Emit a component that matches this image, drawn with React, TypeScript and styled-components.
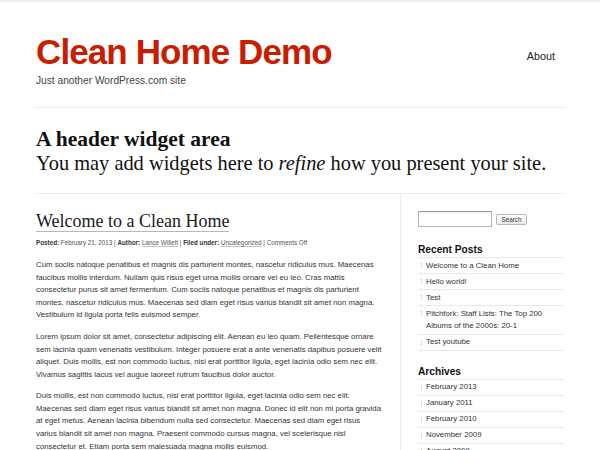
import React from "react";
import styled, { createGlobalStyle } from "styled-components";

const GlobalStyle = createGlobalStyle`
  html, body { margin: 0; padding: 0; background: #fff; }
  body {
    border-top: 2px solid #f0f0f0;
    font-family: "Liberation Sans", Arial, sans-serif;
    color: #333;
  }
  * { box-sizing: border-box; }
`;

const Masthead = styled.header`
  margin: 0 36px;
  padding: 32.4px 0 19px;
  border-bottom: 1px solid #ececec;
  display: flex;
  justify-content: space-between;
  align-items: flex-start;
`;

const Branding = styled.div`
  display: flex;
  flex-direction: column;
`;

const SiteTitle = styled.h1`
  margin: 0;
  font-family: "Liberation Sans", Arial, sans-serif;
  font-weight: bold;
  font-size: 35px;
  line-height: 35px;
  letter-spacing: -0.9px;
  color: #c81d00;
`;

const Tagline = styled.p`
  margin: 4.6px 0 0;
  font-size: 10.2px;
  line-height: 14px;
  color: #444;
`;

const Nav = styled.nav`
  margin-top: 12px;
  padding-right: 9px;
`;

const NavLink = styled.a`
  font-size: 10.8px;
  line-height: 14px;
  color: #222;
  text-decoration: none;
`;

const WidgetArea = styled.section`
  margin: 0 36px;
  padding: 18.7px 0 18.6px;
  font-family: "Liberation Serif", "Times New Roman", serif;
  color: #111;
`;

const WidgetHeading = styled.h2`
  margin: 0;
  font-size: 21.5px;
  line-height: 24px;
  font-weight: bold;
`;

const WidgetText = styled.p`
  margin: 0;
  font-size: 20.4px;
  line-height: 24px;
`;

const Content = styled.div`
  margin: 0 36px;
  border-top: 1px solid #ececec;
  display: flex;
  align-items: stretch;
  min-height: 270px;
`;

const Main = styled.main`
  flex: 0 0 364px;
  padding: 15.3px 18.5px 0 0;
`;

const PostTitle = styled.h2`
  margin: 0;
  font-family: "Liberation Serif", "Times New Roman", serif;
  font-weight: normal;
  font-size: 18px;
  line-height: 22px;
  color: #1a1a1a;
`;

const PostTitleLink = styled.span`
  border-bottom: 1px solid #b8b8b8;
`;

const Meta = styled.div`
  margin-top: 6.6px;
  font-size: 6.3px;
  line-height: 10px;
  color: #555;
`;

const MetaLabel = styled.b`
  color: #333;
`;

const MetaLink = styled.span`
  border-bottom: 1px solid #c4c4c4;
`;

const Body = styled.div`
  margin-top: 10.8px;
`;

const Paragraph = styled.p`
  margin: 0 0 9px;
  font-size: 7.8px;
  line-height: 12.6px;
  color: #333;
`;

const Sidebar = styled.aside`
  flex: 1;
  border-left: 1px solid #ececec;
  padding: 17px 0 0 17px;
`;

const SearchForm = styled.form`
  display: flex;
  align-items: center;
  gap: 4px;
  margin-bottom: 17px;
`;

const SearchInput = styled.input`
  width: 74px;
  height: 16px;
  margin: 0;
  border: 1px solid #b5b5b5;
  border-top-color: #999;
  box-shadow: inset 0 1px 1px rgba(0, 0, 0, 0.06);
  background: #fff;
`;

const SearchButton = styled.button`
  width: 31px;
  height: 11px;
  padding: 0;
  margin: 0;
  border: 1px solid #b8b8b8;
  border-radius: 2px;
  background: linear-gradient(#ffffff, #e9e9e9);
  font-family: "Liberation Sans", Arial, sans-serif;
  font-size: 6.3px;
  line-height: 9px;
  color: #333;
`;

const Widget = styled.section`
  margin-bottom: 15.2px;
`;

const WidgetTitle = styled.h3`
  margin: 0 0 1.2px;
  font-size: 10.2px;
  line-height: 12px;
  font-weight: bold;
  color: #111;
`;

const WidgetList = styled.ul`
  margin: 0;
  padding: 0;
  list-style: none;
  border-top: 1px solid #e8e8e8;
`;

const WidgetItem = styled.li`
  position: relative;
  padding: 1.2px 0 1.2px 8px;
  border-bottom: 1px solid #e8e8e8;
  font-size: 7.8px;
  line-height: 12.6px;
  color: #333;

  &::before {
    content: "";
    position: absolute;
    left: 3px;
    top: 5px;
    width: 0;
    height: 5px;
    border-left: 1px dotted #bdbdbd;
  }
`;

const recentPosts = [
  "Welcome to a Clean Home",
  "Hello world!",
  "Test",
  "Pitchfork: Staff Lists: The Top 200 Albums of the 2000s: 20-1",
  "Test youtube",
];

const archives = [
  "February 2013",
  "January 2011",
  "February 2010",
  "November 2009",
  "August 2009",
  "July 2009",
];

const paragraphs = [
  "Cum sociis natoque penatibus et magnis dis parturient montes, nascetur ridiculus mus. Maecenas faucibus mollis interdum. Nullam quis risus eget urna mollis ornare vel eu leo. Cras mattis consectetur purus sit amet fermentum. Cum sociis natoque penatibus et magnis dis parturient montes, nascetur ridiculus mus. Maecenas sed diam eget risus varius blandit sit amet non magna. Vestibulum id ligula porta felis euismod semper.",
  "Lorem ipsum dolor sit amet, consectetur adipiscing elit. Aenean eu leo quam. Pellentesque ornare sem lacinia quam venenatis vestibulum. Integer posuere erat a ante venenatis dapibus posuere velit aliquet. Duis mollis, est non commodo luctus, nisi erat porttitor ligula, eget lacinia odio sem nec elit. Vivamus sagittis lacus vel augue laoreet rutrum faucibus dolor auctor.",
  "Duis mollis, est non commodo luctus, nisi erat porttitor ligula, eget lacinia odio sem nec elit. Maecenas sed diam eget risus varius blandit sit amet non magna. Donec id elit non mi porta gravida at eget metus. Aenean lacinia bibendum nulla sed consectetur. Maecenas sed diam eget risus varius blandit sit amet non magna. Praesent commodo cursus magna, vel scelerisque nisl consectetur et. Etiam porta sem malesuada magna mollis euismod.",
];

export default function App() {
  return (
    <>
      <GlobalStyle />
      <Masthead>
        <Branding>
          <SiteTitle>Clean Home Demo</SiteTitle>
          <Tagline>Just another WordPress.com site</Tagline>
        </Branding>
        <Nav>
          <NavLink href="#">About</NavLink>
        </Nav>
      </Masthead>
      <WidgetArea>
        <WidgetHeading>A header widget area</WidgetHeading>
        <WidgetText>
          You may add widgets here to <em>refine</em> how you present your site.
        </WidgetText>
      </WidgetArea>
      <Content>
        <Main>
          <PostTitle>
            <PostTitleLink>Welcome to a Clean Home</PostTitleLink>
          </PostTitle>
          <Meta>
            <MetaLabel>Posted:</MetaLabel> February 21, 2013 | <MetaLabel>Author:</MetaLabel>{" "}
            <MetaLink>Lance Willett</MetaLink> | <MetaLabel>Filed under:</MetaLabel>{" "}
            <MetaLink>Uncategorized</MetaLink> | Comments Off
          </Meta>
          <Body>
            {paragraphs.map((p, i) => (
              <Paragraph key={i}>{p}</Paragraph>
            ))}
          </Body>
        </Main>
        <Sidebar>
          <SearchForm onSubmit={(e) => e.preventDefault()}>
            <SearchInput type="text" aria-label="Search" />
            <SearchButton type="submit">Search</SearchButton>
          </SearchForm>
          <Widget>
            <WidgetTitle>Recent Posts</WidgetTitle>
            <WidgetList>
              {recentPosts.map((t) => (
                <WidgetItem key={t}>{t}</WidgetItem>
              ))}
            </WidgetList>
          </Widget>
          <Widget>
            <WidgetTitle>Archives</WidgetTitle>
            <WidgetList>
              {archives.map((t) => (
                <WidgetItem key={t}>{t}</WidgetItem>
              ))}
            </WidgetList>
          </Widget>
        </Sidebar>
      </Content>
    </>
  );
}
